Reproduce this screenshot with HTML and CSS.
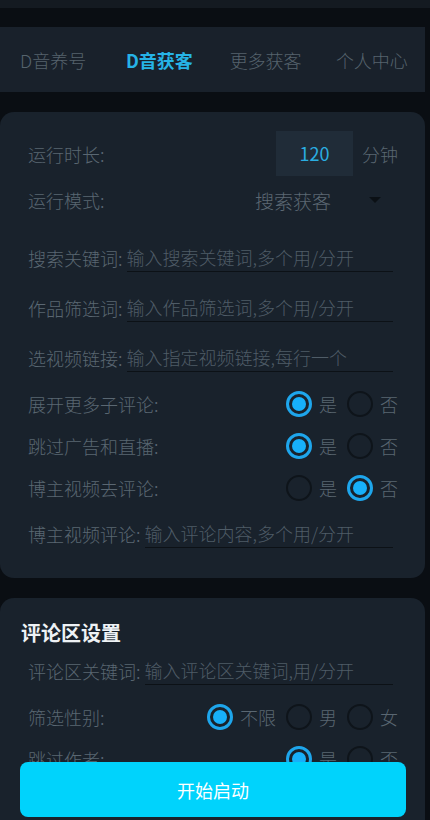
FILE: index.html
```html
<!DOCTYPE html>
<html lang="zh-CN">
<head>
    <meta charset="UTF-8">
    <meta name="viewport" content="width=device-width, initial-scale=1.0">
    <title>D音获客</title>
    <link rel="stylesheet" href="styles.css">
</head>
<body>
    <div class="status-strip"></div>

    <div class="tab-bar">
        <div class="tab">D音养号</div>
        <div class="tab active">D音获客</div>
        <div class="tab">更多获客</div>
        <div class="tab">个人中心</div>
    </div>

    <div class="card card-main">
        <div class="row row-tall">
            <span class="label">运行时长:</span>
            <div class="row-end">
                <div class="num-box">120</div>
                <span class="unit">分钟</span>
            </div>
        </div>
        <div class="row row-mode">
            <span class="label">运行模式:</span>
            <div class="select">
                <span class="select-text">搜索获客</span>
                <span class="caret"></span>
            </div>
        </div>
        <div class="row field">
            <span class="label">搜索关键词:</span>
            <div class="input">输入搜索关键词,多个用/分开</div>
        </div>
        <div class="row field">
            <span class="label">作品筛选词:</span>
            <div class="input">输入作品筛选词,多个用/分开</div>
        </div>
        <div class="row field">
            <span class="label">选视频链接:</span>
            <div class="input">输入指定视频链接,每行一个</div>
        </div>
        <div class="row choice">
            <span class="label">展开更多子评论:</span>
            <div class="options">
                <span class="option"><span class="radio on"></span>是</span>
                <span class="option"><span class="radio"></span>否</span>
            </div>
        </div>
        <div class="row choice">
            <span class="label">跳过广告和直播:</span>
            <div class="options">
                <span class="option"><span class="radio on"></span>是</span>
                <span class="option"><span class="radio"></span>否</span>
            </div>
        </div>
        <div class="row choice">
            <span class="label">博主视频去评论:</span>
            <div class="options">
                <span class="option"><span class="radio"></span>是</span>
                <span class="option"><span class="radio on"></span>否</span>
            </div>
        </div>
        <div class="row field">
            <span class="label">博主视频评论:</span>
            <div class="input">输入评论内容,多个用/分开</div>
        </div>
    </div>

    <div class="card card-comments">
        <div class="card-title">评论区设置</div>
        <div class="row field">
            <span class="label">评论区关键词:</span>
            <div class="input">输入评论区关键词,用/分开</div>
        </div>
        <div class="row choice">
            <span class="label">筛选性别:</span>
            <div class="options">
                <span class="option"><span class="radio on"></span>不限</span>
                <span class="option"><span class="radio"></span>男</span>
                <span class="option"><span class="radio"></span>女</span>
            </div>
        </div>
        <div class="row choice">
            <span class="label">跳过作者:</span>
            <div class="options">
                <span class="option"><span class="radio on"></span>是</span>
                <span class="option"><span class="radio"></span>否</span>
            </div>
        </div>
    </div>

    <button class="start-button">开始启动</button>
</body>
</html>
```

FILE: styles.css
```css
body {
    margin: 0;
    padding: 0;
    background: #0a0e13;
    font-family: "Noto Sans CJK SC", "Noto Sans", sans-serif;
    font-weight: 300;
    color: #5a6772;
    width: 430px;
    overflow: hidden;
}
.status-strip {
    height: 8px;
    background: #141a21;
    margin-bottom: 19px;
}
.tab-bar {
    width: 425px;
    height: 65px;
    background: #19212b;
    display: flex;
    align-items: center;
}
.tab {
    flex: 1;
    text-align: center;
    font-size: 18px;
    color: #56636d;
}
.tab.active {
    color: #26b3e6;
    font-weight: 700;
}
.card {
    width: 425px;
    box-sizing: border-box;
    background: #19222c;
    border-radius: 14px;
    padding: 0 27px 0 28px;
}
.card-main {
    margin-top: 20px;
    padding-top: 19px;
    padding-bottom: 19px;
}
.card-comments {
    margin-top: 20px;
    padding-top: 22px;
    padding-bottom: 80px;
}
.card-title {
    height: 26px;
    line-height: 26px;
    margin-left: -7px;
    font-size: 20px;
    font-weight: 700;
    color: #eef2f5;
}
.row {
    display: flex;
    align-items: center;
    font-size: 18px;
}
.label {
    white-space: nowrap;
    color: #5a6772;
}
.row-tall {
    height: 45px;
    justify-content: space-between;
}
.row-end {
    display: flex;
    align-items: center;
    height: 100%;
}
.num-box {
    width: 77px;
    height: 45px;
    line-height: 45px;
    background: #202c38;
    color: #2aaee2;
    text-align: center;
    font-weight: 400;
}
.unit {
    margin-left: 9px;
}
.row-mode {
    height: 48px;
    margin-bottom: 9px;
    justify-content: space-between;
}
.select {
    display: flex;
    align-items: center;
    margin-right: 17px;
}
.select-text {
    font-size: 19px;
    color: #5c6873;
}
.caret {
    width: 0;
    height: 0;
    border-left: 6px solid transparent;
    border-right: 6px solid transparent;
    border-top: 6px solid #0b1015;
    margin-left: 38px;
}
.field {
    height: 50px;
}
.input {
    flex: 1;
    height: 26px;
    line-height: 24px;
    margin-left: 4px;
    margin-right: 5px;
    border-bottom: 1px solid #0c1116;
    color: #4f5c67;
    white-space: nowrap;
}
.choice {
    height: 42px;
    justify-content: space-between;
}
.options {
    display: flex;
    align-items: center;
    gap: 10px;
}
.option {
    display: flex;
    align-items: center;
    gap: 7px;
    color: #5a6772;
}
.radio {
    width: 26px;
    height: 26px;
    box-sizing: border-box;
    border-radius: 50%;
    border: 2px solid #0e141a;
    position: relative;
}
.radio.on {
    border: 3px solid #1ea6ec;
}
.radio.on::after {
    content: "";
    position: absolute;
    left: 3px;
    top: 3px;
    width: 14px;
    height: 14px;
    border-radius: 50%;
    background: #17b0fa;
}
.start-button {
    position: fixed;
    left: 20px;
    bottom: 3px;
    width: 386px;
    height: 55px;
    border: none;
    border-radius: 8px;
    background: #00d3fc;
    color: #ffffff;
    font-family: "Noto Sans CJK SC", "Noto Sans", sans-serif;
    font-size: 18px;
}
```
